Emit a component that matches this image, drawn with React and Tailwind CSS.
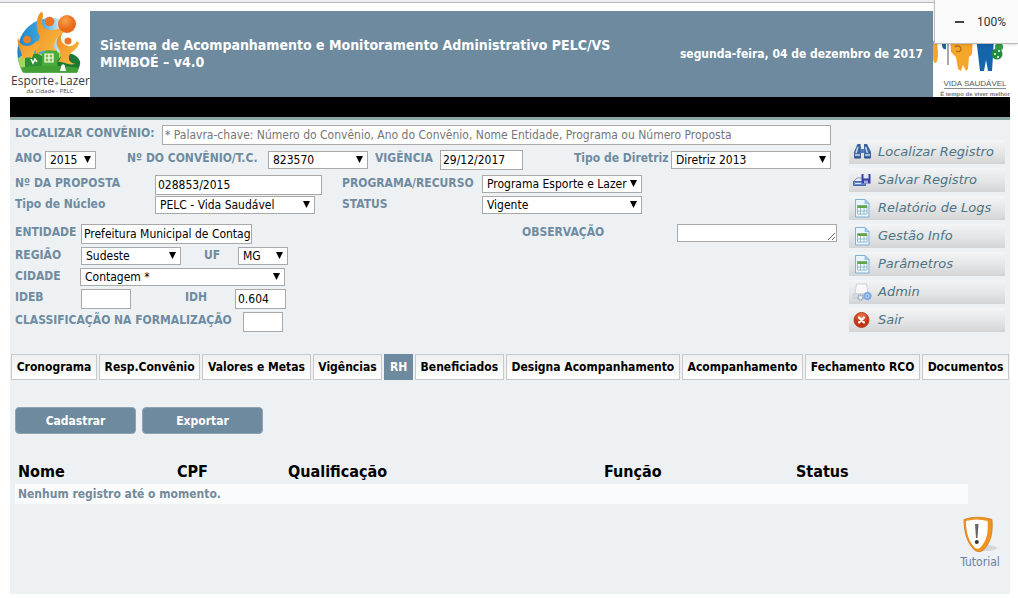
import React from "react";

const cx = (...parts) => parts.filter(Boolean).join(" ");

function Label({ className, ...props }) {
  return <label className={cx("shrink-0 whitespace-nowrap text-[12px] leading-4 font-bold text-[#6f8ba0]", className)} {...props} />;
}

function Input({ className, ...props }) {
  return (
    <input
      className={cx("h-5 min-w-0 border border-[#a9a9a9] bg-white pl-[2px] text-[12px] leading-4 text-black placeholder:text-[#757575]", className)}
      {...props}
    />
  );
}

function Select({ className, options, ...props }) {
  return (
    <span className={cx("relative block shrink-0", className)}>
      <select className="block h-[18px] w-full appearance-none border border-[#a9a9a9] bg-white pr-3 pl-1 text-[12px] leading-4 text-black" {...props}>
        {options.map((o) => (
          <option key={o}>{o}</option>
        ))}
      </select>
      <svg className="pointer-events-none absolute top-[5px] right-[5px] h-[7px] w-[7px]" viewBox="0 0 7 7" aria-hidden="true">
        <path d="M0 0h7L3.5 7z" fill="#000" />
      </svg>
    </span>
  );
}

function PelcLogo() {
  return (
    <svg viewBox="0 0 80 86" className="h-[86px] w-20 shrink-0 bg-white font-normal" role="img" aria-label="Esporte e Lazer da Cidade - PELC">
      <defs>
        <clipPath id="pelc-disc">
          <path d="M13 61.500C-1 38 12 7 42 7c24 0 38 26 25 54.500z" />
        </clipPath>
        <linearGradient id="pelc-sky" x1="0" y1="0" x2="1" y2="0">
          <stop offset="0" stopColor="#1479c4" />
          <stop offset=".4" stopColor="#3fa8e0" />
          <stop offset=".7" stopColor="#ffffff" />
        </linearGradient>
        <linearGradient id="pelc-body" x1="0" y1="0" x2="1" y2="1">
          <stop offset="0" stopColor="#ee8a1e" />
          <stop offset="1" stopColor="#fbc048" />
        </linearGradient>
        <radialGradient id="pelc-ball" cx=".4" cy=".3">
          <stop offset="0" stopColor="#f9a54a" />
          <stop offset="1" stopColor="#ea6a1c" />
        </radialGradient>
      </defs>
      <g clipPath="url(#pelc-disc)">
        <path d="M0 0h80v64H0z" fill="url(#pelc-sky)" />
        <path d="M5 50c8-8 17-10 27-7l14-2c12 0 22 6 26 18v5H6z" fill="#a5d65a" />
        <path d="M15 45l12-3 8 5v17H15z" fill="#2f8f35" />
        <path d="M32 43l4-4h10l3 4v20H32z" fill="#4bab38" />
        <path d="M47 52c4-14 22-12 24 2l-3 9H49z" fill="#1d7a35" />
        <path d="M8 57c16-3 40-3 62 0v6H8z" fill="#43a037" />
      </g>
      <path d="M31 1c3 0 2 5 1 9 0 5 2 8 7 9 7 1 11-3 15-2l1 3-9 8c-3 6-2 9 0 12-6-1-12-2-20 3-1-8 2-13 4-17-4-7-5-19 1-25z" fill="url(#pelc-body)" />
      <path d="M8 26c1 6 4 9 9 9 5 0 7-3 10-5l4 3-7 8-2 6c-4-1-7 0-10 1 1-9-6-12-4-22z" fill="url(#pelc-body)" />
      <path d="M53 22c-4 4-2 9 1 11 5 4 10 2 13-3l2 2c-1 7-8 8-10 13-1 5 2 7 6 8-7 2-12-3-17-2 5-6 3-9 0-14-3-6-1-12 5-15z" fill="url(#pelc-body)" />
      <circle cx="39.500" cy="10.500" r="4.800" fill="#ec7425" />
      <circle cx="17" cy="28.500" r="3.800" fill="#ec8125" />
      <circle cx="58" cy="30" r="3.500" fill="#ec7425" />
      <circle cx="57" cy="13" r="9" fill="url(#pelc-ball)" />
      <path d="M35 43h8v8h-8zM39 43v8M35 47h8" fill="#7fbe3a" stroke="#fff" strokeWidth="1.200" />
      <path d="M21 48l2 4 2-4 2 3" fill="none" stroke="#fff" strokeWidth="1.500" />
      <path d="M51 56c1-4 4-3 4 0l1 4h-6z" fill="#fff" />
      <text x="1" y="74" fontSize="12" fill="#3a3a3a" fontFamily="'Open Sans','Noto Sans',sans-serif">Esporte</text>
      <text x="45" y="74" fontSize="6" fill="#3a3a3a" fontFamily="'Open Sans','Noto Sans',sans-serif">e</text>
      <text x="80" y="74" fontSize="12" textAnchor="end" fill="#3a3a3a" fontFamily="'Open Sans','Noto Sans',sans-serif">Lazer</text>
      <text x="40" y="82" fontSize="6" textAnchor="middle" fill="#444" fontFamily="'Open Sans','Noto Sans',sans-serif">da Cidade - PELC</text>
    </svg>
  );
}

function VidaLogo() {
  return (
    <svg viewBox="0 0 77 86" className="h-[86px] w-[77px] shrink-0 bg-white font-normal" role="img" aria-label="Vida Saudável">
      <path d="M0 30h4l1 12c0 6-1 10-3 10s-2-6-2-9z" fill="#f4a62a" />
      <path d="M9 26h4v12c-3 1-4-2-4-5z" fill="#1b63a8" />
      <path d="M15 28v26" stroke="#a8a8ac" strokeWidth="2" />
      <path d="M17 26h23l-1 17-3 3-1 12-2 2-3-6-2 6-3-2-2-12-5-5z" fill="#f4a62a" />
      <path d="M22 36c2-2 6-1 6 2s-3 3-5 2" fill="none" stroke="#b26b14" strokeWidth="1.300" />
      <path d="M43 26h18l-1 19-1 15h-4l-2-11-2 11h-4z" fill="#1565ad" />
      <circle cx="64" cy="43" r="5.500" fill="#238b3d" />
      <circle cx="66" cy="36" r="4" fill="#2f9b44" />
      <circle cx="62" cy="43" r="1" fill="#fff" />
      <circle cx="66" cy="40" r="1" fill="#fff" />
      <circle cx="65" cy="46" r="1" fill="#fff" />
      <text x="42" y="75" fontSize="8" textAnchor="middle" fill="#58585a" fontFamily="'Liberation Sans',sans-serif">VIDA SAUDÁVEL</text>
      <path d="M11 77.500h62" stroke="#8d8d90" />
      <text x="42" y="85" fontSize="6" fontWeight="700" textAnchor="middle" fill="#77777a" fontFamily="'Liberation Sans',sans-serif">É tempo de viver melhor</text>
    </svg>
  );
}

function BinocularsIcon() {
  return (
    <svg viewBox="0 0 20 20" className="h-5 w-5" aria-hidden="true">
      <path d="M5.500 2h3l.5 4v10H2v-6zM12 2h3l4 8v6h-7V6z" fill="#3c659f" />
      <path d="M8.500 7h4v4h-4z" fill="#4f7ab5" />
      <path d="M6 5l-2 6M13.500 5l2 6M3 13h5M13 13h5" stroke="#c5d8f0" strokeWidth="1.500" />
      <path d="M2.500 16h6M12.500 16h6" stroke="#22467a" />
    </svg>
  );
}

function SaveIcon() {
  return (
    <svg viewBox="0 0 20 20" className="h-5 w-5" aria-hidden="true">
      <path d="M2 11l3-3h8v5H2z" fill="#e6ecf6" stroke="#8c9dc4" />
      <path d="M1.500 11.500h12v4h-12z" fill="#6387cb" stroke="#4a66a5" />
      <path d="M3 13.500h6" stroke="#d9e6fb" />
      <path d="M9.500 4h9v9.500h-7l-2-1.500z" fill="#3a41a0" />
      <path d="M11.500 4h5v4.500h-5z" fill="#e3e7f8" />
      <path d="M12 10.500h4v3h-4z" fill="#a4a8dc" />
    </svg>
  );
}

function ReportIcon() {
  return (
    <svg viewBox="0 0 20 20" className="h-5 w-5" aria-hidden="true">
      <path d="M3.500 1.500h9.500l4 4v13.500h-13.500z" fill="#eaf4fc" stroke="#7fb2d6" />
      <path d="M13 1.500v4h4z" fill="#a8cfea" stroke="#7fb2d6" strokeWidth=".7" />
      <path d="M5.500 7.500h9.500v8.500h-9.500z" fill="#fff" stroke="#79a8c8" strokeWidth=".8" />
      <path d="M5.500 7.500h9.500v2.500h-9.500z" fill="#62a63c" />
      <path d="M5.500 13h9.500M8.500 10v6M12 10v6" stroke="#79a8c8" strokeWidth=".8" />
    </svg>
  );
}

function AdminIcon() {
  return (
    <svg viewBox="0 0 20 20" className="h-5 w-5" aria-hidden="true">
      <path d="M4.500 2h10l1.500 10H3z" fill="#f8f8f9" stroke="#cfd1d5" />
      <path d="M2 12h11v4H2z" fill="#dcdee2" stroke="#b9bdc5" strokeWidth=".6" />
      <circle cx="8.500" cy="15.500" r="2.500" fill="#e5e9f0" stroke="#9aa9c2" strokeWidth="1.600" strokeDasharray="1.500 .6" />
      <circle cx="15.500" cy="14" r="3" fill="#eaf2fc" stroke="#82aee4" strokeWidth="2.400" />
      <circle cx="15.500" cy="14" r="1.200" fill="#6c9fdc" />
    </svg>
  );
}

function ExitIcon() {
  return (
    <svg viewBox="0 0 20 20" className="h-5 w-5" aria-hidden="true">
      <defs>
        <radialGradient id="exit-fill" cx=".5" cy=".25">
          <stop offset="0" stopColor="#f07a50" />
          <stop offset="1" stopColor="#c62f10" />
        </radialGradient>
      </defs>
      <circle cx="9.500" cy="10" r="7.500" fill="url(#exit-fill)" stroke="#b04a30" />
      <path d="M7 7.500l5 5M12 7.500l-5 5" stroke="#fff" strokeWidth="2.400" strokeLinecap="round" />
    </svg>
  );
}

const menu = [
  ["Localizar Registro", BinocularsIcon],
  ["Salvar Registro", SaveIcon],
  ["Relatório de Logs", ReportIcon],
  ["Gestão Info", ReportIcon],
  ["Parâmetros", ReportIcon],
  ["Admin", AdminIcon],
  ["Sair", ExitIcon],
];

const tabs = [
  "Cronograma",
  "Resp.Convênio",
  "Valores e Metas",
  "Vigências",
  "RH",
  "Beneficiados",
  "Designa Acompanhamento",
  "Acompanhamento",
  "Fechamento RCO",
  "Documentos",
];

function SearchForm() {
  return (
    <form className="min-w-0 max-w-[822px] flex-1 pt-[5px]" onSubmit={(e) => e.preventDefault()}>
      <div className="flex items-start pr-[6px]">
        <Label htmlFor="busca" className="w-[147px]">LOCALIZAR CONVÊNIO:</Label>
        <Input id="busca" className="flex-1" placeholder="* Palavra-chave: Número do Convênio, Ano do Convênio, Nome Entidade, Programa ou Número Proposta" />
      </div>
      <div className="mt-[5px] flex items-start pr-[6px]">
        <Label htmlFor="ano" className="w-[30px]">ANO</Label>
        <Select id="ano" className="mt-px w-[51px]" options={["2015"]} />
        <Label htmlFor="convenio" className="ml-[31px] w-[141px]">Nº DO CONVÊNIO/T.C.</Label>
        <Select id="convenio" className="mt-px w-[100px]" options={["823570"]} />
        <Label htmlFor="vigencia" className="ml-[7px] w-[65px]">VIGÊNCIA</Label>
        <Input id="vigencia" className="w-[83px]" defaultValue="29/12/2017" />
        <Label htmlFor="diretriz" className="ml-auto w-[97px]">Tipo de Diretriz</Label>
        <Select id="diretriz" className="mt-px w-[160px]" options={["Diretriz 2013"]} />
      </div>
      <div className="mt-[5px] flex items-start">
        <Label htmlFor="proposta" className="w-[140px]">Nº DA PROPOSTA</Label>
        <Input id="proposta" className="w-[167px]" defaultValue="028853/2015" />
        <Label htmlFor="programa" className="ml-5 w-[140px]">PROGRAMA/RECURSO</Label>
        <Select id="programa" className="w-[160px]" options={["Programa Esporte e Lazer"]} />
      </div>
      <div className="mt-px flex items-start">
        <Label htmlFor="nucleo" className="w-[140px]">Tipo de Núcleo</Label>
        <Select id="nucleo" className="w-[160px]" options={["PELC - Vida Saudável"]} />
        <Label htmlFor="status" className="ml-[27px] w-[140px]">STATUS</Label>
        <Select id="status" className="w-[160px]" options={["Vigente"]} />
      </div>
      <div className="mt-[10px] flex items-start">
        <Label htmlFor="entidade" className="w-[66px]">ENTIDADE</Label>
        <Input id="entidade" className="w-[171px]" defaultValue="Prefeitura Municipal de Contag" />
        <Label htmlFor="observacao" className="ml-auto w-[155px]">OBSERVAÇÃO</Label>
        <textarea id="observacao" rows="1" className="block h-[18px] w-[160px] shrink-0 border border-[#a9a9a9] bg-white text-[12px] leading-4" />
      </div>
      <div className="mt-[3px] flex items-start">
        <Label htmlFor="regiao" className="w-[66px]">REGIÃO</Label>
        <Select id="regiao" className="w-[100px]" options={["Sudeste"]} />
        <Label htmlFor="uf" className="ml-[23px] w-[34px]">UF</Label>
        <Select id="uf" className="w-[50px]" options={["MG"]} />
      </div>
      <div className="mt-[3px] flex items-start">
        <Label htmlFor="cidade" className="w-[65px]">CIDADE</Label>
        <Select id="cidade" className="w-[205px]" options={["Contagem *"]} />
      </div>
      <div className="mt-[3px] flex items-start">
        <Label htmlFor="ideb" className="w-[66px]">IDEB</Label>
        <Input id="ideb" className="w-[50px]" />
        <Label htmlFor="idh" className="ml-[54px] w-[50px]">IDH</Label>
        <Input id="idh" className="w-[51px]" defaultValue="0.604" />
      </div>
      <div className="mt-[3px] flex items-start">
        <Label htmlFor="classificacao" className="w-[228px]">CLASSIFICAÇÃO NA FORMALIZAÇÃO</Label>
        <Input id="classificacao" className="w-10" />
      </div>
    </form>
  );
}

export default function App() {
  return (
    <div className="relative border-t-2 border-[#ededf0] bg-white font-['DejaVu_Sans_Condensed','Noto_Sans',sans-serif]">
      <div className="border-t border-[#b5b8bc] pt-2 pr-2 pb-1 pl-[10px]">
        <header className="flex h-[86px] items-center bg-[#6e8a9e] font-bold text-white">
          <PelcLogo />
          <h1 className="min-w-0 flex-1 pl-[10px] text-[14px] leading-[17px]">
            Sistema de Acompanhamento e Monitoramento Administrativo PELC/VS
            <br />
            MIMBOÉ – v4.0
          </h1>
          <p className="shrink-0 px-[10px] text-[12px]">segunda-feira, 04 de dezembro de 2017</p>
          <VidaLogo />
        </header>
        <div className="h-[23px] border-b-[3px] border-[#88a59f] bg-black" />
        <main className="bg-[#edf1f4] pb-6">
          <div className="flex justify-between pl-[5px]">
            <SearchForm />
            <nav className="mt-5 mr-[5px] ml-2 flex w-[156px] shrink-0 flex-col gap-1">
              {menu.map(([text, Icon]) => (
                <a
                  key={text}
                  href="#"
                  className="flex h-6 items-center gap-[6px] bg-linear-to-b from-[#f3f5f6] via-[#e4e6e8] to-[#d2d4d6] pl-[3px] font-['DejaVu_Sans',sans-serif] text-[13px] whitespace-nowrap text-[#4e7482] italic"
                >
                  <Icon />
                  {text}
                </a>
              ))}
            </nav>
          </div>
          <div className="mt-[22px] flex gap-[2px] px-px" role="tablist">
            {tabs.map((t) => (
              <button
                key={t}
                type="button"
                role="tab"
                aria-selected={t === "RH"}
                className={cx(
                  "h-[26px] flex-auto border text-[12px] font-bold whitespace-nowrap",
                  t === "RH" ? "border-[#6e8a9e] bg-[#6e8a9e] text-white" : "border-[#c9c9c9] bg-linear-to-b from-[#efefef] to-white text-black"
                )}
              >
                {t}
              </button>
            ))}
          </div>
          <div className="mt-[27px] flex gap-[6px] pl-[5px]">
            <button type="button" className="h-[27px] w-[121px] rounded-[4px] border border-[#8ea4b3] bg-[#6e8a9e] text-[12px] font-bold text-white">Cadastrar</button>
            <button type="button" className="h-[27px] w-[121px] rounded-[4px] border border-[#8ea4b3] bg-[#6e8a9e] text-[12px] font-bold text-white">Exportar</button>
          </div>
          <div className="mt-[26px] mr-[42px] ml-[5px]">
            <table className="w-full table-fixed text-left">
              <thead>
                <tr className="h-6 text-[16px] leading-6 text-black">
                  <th className="w-[159px] pl-[3px]">Nome</th>
                  <th className="w-[111px] pl-[3px]">CPF</th>
                  <th className="w-[316px] pl-[3px]">Qualificação</th>
                  <th className="w-[192px] pl-[3px]">Função</th>
                  <th className="pl-[3px]">Status</th>
                </tr>
              </thead>
              <tbody>
                <tr className="h-5 bg-[#f9fbfd] text-[12px] leading-5 font-bold text-[#748a99]">
                  <td colSpan="5" className="pl-[3px]">Nenhum registro até o momento.</td>
                </tr>
              </tbody>
            </table>
          </div>
          <div className="mt-3 flex justify-end pr-[10px]">
            <a href="#" className="flex flex-col items-center text-[12px] leading-4 text-[#6a7fa6]">
              <svg viewBox="0 0 40 38" className="h-[38px] w-10" aria-hidden="true">
                <ellipse cx="26" cy="32" rx="11" ry="3" fill="#c9ccd0" opacity=".7" />
                <path d="M4 3.500c9-3 18-3 28 0 1 13-1 23-9 31-3 1.500-5 1.500-8 0C8 28 4 18 4 3.500z" fill="#ef9420" stroke="#d07a18" strokeWidth=".8" />
                <path d="M6 5c7-2 14-2 21.500 0 1 12-1 20-7.500 27-2 1-3 1-5 0C9 26 6 17 6 5z" fill="#fdfdfd" />
                <path d="M15 8h3.500l-1 14h-1.500z" fill="#666" />
                <circle cx="16.800" cy="26" r="2" fill="#333" />
              </svg>
              Tutorial
            </a>
          </div>
        </main>
      </div>
      <div className="absolute -top-[2px] right-0 flex h-11 w-[84px] items-center gap-[13px] border-b border-l border-[#bdbdbd] bg-[#fafafa] pl-5 font-['Roboto',sans-serif] text-[12px] text-[#333] shadow">
        <button type="button" aria-label="Diminuir zoom" className="h-[2px] w-[9px] bg-[#444]" />
        <span>100%</span>
      </div>
    </div>
  );
}
